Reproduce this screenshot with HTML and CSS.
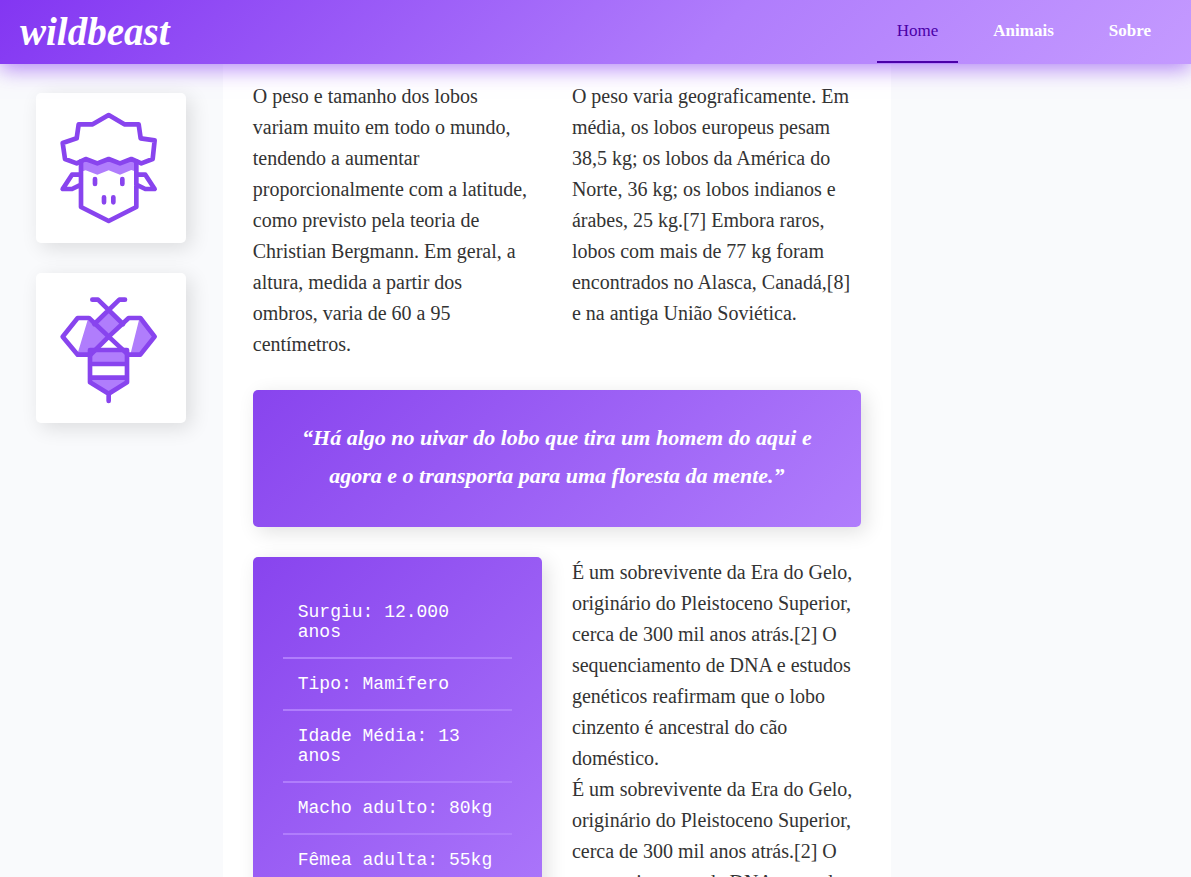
FILE: index.html
```html
<!DOCTYPE html>
<html lang="pt-BR">
<head>
<meta charset="utf-8">
<title>wildbeast</title>
<link rel="stylesheet" href="styles.css">
</head>
<body>
<div class="page">
  <header class="header">
    <a class="logo" href="#">wildbeast</a>
    <nav class="nav">
      <a class="nav-link active" href="#">Home</a>
      <a class="nav-link" href="#">Animais</a>
      <a class="nav-link" href="#">Sobre</a>
    </nav>
  </header>
  <div class="layout">
    <aside class="sidebar">
      <a class="card" href="#" aria-label="Ovelha">
        <svg class="icon" viewBox="0 0 450 450">
          <path class="shade" d="M135 205 149 198 184 211 218 198 252 211 286 198 301 205V236L286 231 252 245 218 232 184 245 149 232 135 236Z"/>
          <path class="line" d="M218 66 265 94H308L314 136 356 142 350 198 316 211 286 198 252 211 218 198 184 211 149 198 122 211 87 198 80 150 122 136 128 94H170Z"/>
          <path class="line" d="M135 205V342L218 384 301 342V205M135 245H108L80 288H108L135 275M301 245H328L356 288H328L301 275"/>
          <path class="line" d="M177 258V273M259 258V273M204 313V328M232 313V328"/>
        </svg>
      </a>
      <a class="card" href="#" aria-label="Abelha">
        <svg class="icon" viewBox="0 0 450 450">
          <path class="shade" d="M218 113 261 153 218 191 175 153ZM155 141 218 191 164 245 125 241ZM309 141 356 191 313 245 284 241ZM162 231H273V273H162ZM162 314H273V328L218 362 162 328Z"/>
          <path class="line" d="M80 191 125 135H159L218 191 164 245H125ZM356 191 313 135H278L218 191 276 245H313Z"/>
          <path class="line" d="M169 80H186L261 153M267 80H250L175 153M162 231H273V328L218 362 162 328ZM162 273H273M162 314H273M218 362V384"/>
        </svg>
      </a>
    </aside>
    <main class="content">
      <p>O peso e tamanho dos lobos<br>variam muito em todo o mundo,<br>tendendo a aumentar<br>proporcionalmente com a latitude,<br>como previsto pela teoria de<br>Christian Bergmann. Em geral, a<br>altura, medida a partir dos<br>ombros, varia de 60 a 95<br>centímetros.</p>
      <p>O peso varia geograficamente. Em<br>média, os lobos europeus pesam<br>38,5 kg; os lobos da América do<br>Norte, 36 kg; os lobos indianos e<br>árabes, 25 kg.[7] Embora raros,<br>lobos com mais de 77 kg foram<br>encontrados no Alasca, Canadá,[8]<br>e na antiga União Soviética.</p>
      <blockquote class="quote">“Há algo no uivar do lobo que tira um homem do aqui e<br>agora e o transporta para uma floresta da mente.”</blockquote>
      <ul class="facts">
        <li>Surgiu: 12.000 anos</li>
        <li>Tipo: Mamífero</li>
        <li>Idade Média: 13 anos</li>
        <li>Macho adulto: 80kg</li>
        <li>Fêmea adulta: 55kg</li>
      </ul>
      <div>
        <p>É um sobrevivente da Era do Gelo,<br>originário do Pleistoceno Superior,<br>cerca de 300 mil anos atrás.[2] O<br>sequenciamento de DNA e estudos<br>genéticos reafirmam que o lobo<br>cinzento é ancestral do cão<br>doméstico.</p>
        <p>É um sobrevivente da Era do Gelo,<br>originário do Pleistoceno Superior,<br>cerca de 300 mil anos atrás.[2] O<br>sequenciamento de DNA e estudos<br>genéticos reafirmam que o lobo<br>cinzento é ancestral do cão<br>doméstico.</p>
      </div>
    </main>
  </div>
</div>
</body>
</html>
```
FILE: styles.css
```css
* { box-sizing: border-box; margin: 0; padding: 0; }

body {
  font-family: "Liberation Serif", serif;
  color: #333;
  background: #f9fafc;
}

a { text-decoration: none; }

.page {
  display: flex;
  flex-direction: column;
  height: 100vh;
  overflow: hidden;
}

.header {
  position: relative;
  z-index: 1;
  flex: none;
  display: flex;
  justify-content: space-between;
  height: 64px;
  padding: 0 20px;
  background: linear-gradient(135deg, #8336f2, #b07dfc 60%, #c49aff);
  box-shadow: 0 5px 20px rgba(131, 54, 242, 0.6);
}

.logo {
  align-self: center;
  font-size: 39px;
  line-height: 60px;
  font-weight: bold;
  font-style: italic;
  color: #fff;
}

.nav { display: flex; gap: 15px; }

.nav-link {
  height: 63px;
  padding: 0 20px;
  border-bottom: 2px solid transparent;
  font-size: 17px;
  line-height: 61px;
  font-weight: bold;
  color: #fff;
}

.nav-link.active {
  border-color: #4b00a8;
  font-weight: normal;
  color: #4b00a8;
}

.layout {
  flex: 1;
  display: grid;
  grid-template-columns: 1fr 3fr 300px;
  min-height: 0;
}

.sidebar {
  display: flex;
  flex-direction: column;
  align-items: center;
  gap: 30px;
  padding-top: 29px;
}

.card {
  width: 150px;
  height: 150px;
  border-radius: 5px;
  background: #fff;
  box-shadow: 5px 5px 20px rgba(0, 0, 0, 0.12);
}

.icon { display: block; width: 100%; height: 100%; }

.line {
  fill: none;
  stroke: #8844ee;
  stroke-width: 14;
  stroke-linecap: round;
  stroke-linejoin: round;
}

.shade { fill: #b07dfc; }

.content {
  display: grid;
  grid-template-columns: 1fr 1fr;
  align-content: start;
  gap: 30px;
  padding: 17px 30px 30px;
  background: #fff;
  font-size: 20px;
  line-height: 31px;
  white-space: nowrap;
}

.quote,
.facts {
  padding: 30px;
  border-radius: 5px;
  background: linear-gradient(135deg, #8844ee, #b07dfc);
  box-shadow: 5px 5px 20px rgba(0, 0, 0, 0.12);
  color: #fff;
}

.quote {
  grid-column: 1 / -1;
  padding: 29px 30px 32px;
  font-size: 22px;
  line-height: 38px;
  font-weight: bold;
  font-style: italic;
  text-align: center;
}

.facts {
  list-style: none;
  font-family: "Liberation Mono", monospace;
  font-size: 18px;
  line-height: 20px;
  white-space: normal;
}

.facts li {
  padding: 15px;
  border-bottom: 2px solid #b07dfc;
}

.facts li:last-child { border-bottom: 0; }
```
